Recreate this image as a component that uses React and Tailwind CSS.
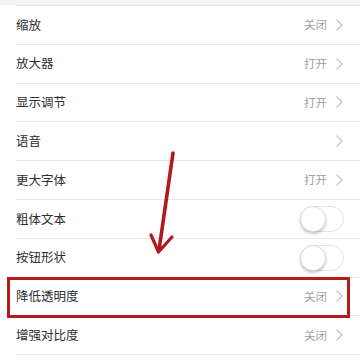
import React from "react";

const rows = [
  { label: "缩放", value: "关闭", type: "link" },
  { label: "放大器", value: "打开", type: "link" },
  { label: "显示调节", value: "打开", type: "link" },
  { label: "语音", value: "", type: "link" },
  { label: "更大字体", value: "打开", type: "link" },
  { label: "粗体文本", type: "toggle" },
  { label: "按钮形状", type: "toggle" },
  { label: "降低透明度", value: "关闭", type: "link" },
  { label: "增强对比度", value: "关闭", type: "link" },
];

function Chevron() {
  return (
    <svg width="7" height="12" viewBox="0 0 7 12" className="ml-[9px]">
      <path d="M1 1 L6 6 L1 11" fill="none" stroke="#c4c4c4" strokeWidth="1.3" strokeLinecap="round" strokeLinejoin="round" />
    </svg>
  );
}

function Toggle() {
  return (
    <div className="relative w-[44px] h-[26px] rounded-full border border-[#e3e3e3] bg-white mr-[16px]">
      <div className="absolute left-[-1px] top-[-1px] w-[26px] h-[26px] rounded-full bg-white border border-[#dcdcdc] shadow-[0_2px_3px_rgba(0,0,0,0.22)]" />
    </div>
  );
}

export default function App() {
  return (
    <div
      className="relative w-[360px] h-[360px] bg-white overflow-hidden"
      style={{ fontFamily: '"Noto Sans CJK SC", "Noto Sans", sans-serif' }}
    >
      <div className="h-[5px] bg-[#f4f4f4]" />
      <div className="ml-[16px] border-t border-[#e6e6e6]" />
      {rows.map((r, i) => (
        <div key={i} className="ml-[16px] h-[38.8px] border-b border-[#e6e6e6] flex items-center justify-between">
          <span className="text-[12.5px] text-[#2e2e2e]">{r.label}</span>
          {r.type === "link" ? (
            <div className="flex items-center mr-[17px]">
              <span className="text-[11.5px] text-[#a0a0a0]">{r.value}</span>
              <Chevron />
            </div>
          ) : (
            <Toggle />
          )}
        </div>
      ))}
      <div className="absolute left-[7px] top-[277px] w-[343px] h-[41px] border-[3.5px] border-[#b41c1c]" />
      <svg className="absolute left-0 top-0" width="360" height="360" viewBox="0 0 360 360">
        <path d="M173 153 L159 250" stroke="#b01a1a" strokeWidth="3.6" strokeLinecap="round" fill="none" />
        <path d="M151 235 L158.5 252 L172 237" stroke="#b01a1a" strokeWidth="3.2" strokeLinecap="round" strokeLinejoin="round" fill="none" />
      </svg>
    </div>
  );
}
